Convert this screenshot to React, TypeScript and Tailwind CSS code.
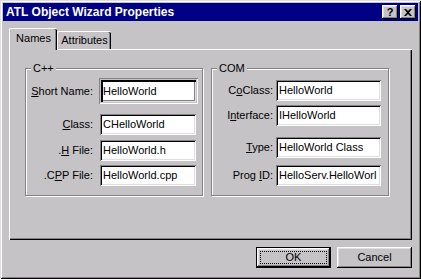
import React from "react";

const raised =
  "shadow-[inset_-1px_-1px_#000,inset_1px_1px_#fff,inset_-2px_-2px_#848284,inset_2px_2px_#dedfde]";
const sunken =
  "shadow-[inset_1px_1px_#848284,inset_-1px_-1px_#fff,inset_2px_2px_#000,inset_-2px_-2px_#dedfde]";

function Label({ text, k, width }: { text: string; k: number; width: string }) {
  return (
    <span className={`${width} text-right whitespace-nowrap leading-[13px]`}>
      {text.slice(0, k)}
      <u className="underline-offset-[1px]">{text[k]}</u>
      {text.slice(k + 1)}
    </span>
  );
}

function Field({ value, width }: { value: string; width: string }) {
  return (
    <div
      className={`${width} h-[21px] bg-white ${sunken} pl-[3px] pr-[2px] flex items-center overflow-hidden whitespace-nowrap`}
    >
      {value}
    </div>
  );
}

function Row({
  label,
  k,
  value,
  labelW,
  gap,
  fieldW,
  className = "",
}: {
  label: string;
  k: number;
  value: string;
  labelW: string;
  gap: string;
  fieldW: string;
  className?: string;
}) {
  return (
    <div className={`flex items-center ${className}`}>
      <Label text={label} k={k} width={labelW} />
      <div className={gap} />
      <Field value={value} width={fieldW} />
    </div>
  );
}

function GroupBox({ title, children, className = "" }: { title: string; children: React.ReactNode; className?: string }) {
  return (
    <div
      className={`relative w-[178px] h-[128px] border border-[#848284] shadow-[inset_1px_1px_#fff,1px_1px_#fff] ${className}`}
    >
      <span className="absolute -top-[7px] left-[5px] px-[2px] bg-[#c6c3c6] leading-[13px]">{title}</span>
      {children}
    </div>
  );
}

export default function App() {
  return (
    <div className="w-[421px] h-[279px] bg-[#c6c3c6] p-[3px] flex flex-col text-[11px] text-black font-['Liberation_Sans',Arial,sans-serif] shadow-[inset_1px_1px_#dedfde,inset_-1px_-1px_#000,inset_2px_2px_#fff,inset_-2px_-2px_#848284]">
      {/* Title bar */}
      <div className="h-[18px] bg-[#000084] flex items-center pl-[3px] pr-[2px]">
        <span className="flex-1 text-white font-bold text-[12px] leading-[14px]">ATL Object Wizard Properties</span>
        <div className={`w-[16px] h-[14px] bg-[#c6c3c6] ${raised} flex items-center justify-center font-bold text-[11px] leading-none`}>
          ?
        </div>
        <div className={`w-[16px] h-[14px] ml-[2px] bg-[#c6c3c6] ${raised} flex items-center justify-center`}>
          <svg width="8" height="7" viewBox="0 0 8 7">
            <path d="M0 0h2l2 2 2-2h2L5 3.5 8 7H6L4 5 2 7H0l3-3.5z" fill="#000" />
          </svg>
        </div>
      </div>

      <div className="flex-1 flex flex-col px-[6px] pt-[7px]">
        {/* Tabs */}
        <div className="flex items-end">
          <div className="relative z-10 w-[48px] h-[22px] -mb-px bg-[#c6c3c6] border-t border-l border-white rounded-tl-[2px] rounded-tr-[2px] shadow-[inset_-1px_0_#000,inset_-2px_0_#848284] flex items-start justify-center pt-[3px] leading-[13px]">
            Names
          </div>
          <div className="w-[54px] h-[18px] bg-[#c6c3c6] border-t border-l border-white rounded-tl-[2px] rounded-tr-[2px] shadow-[inset_-1px_0_#000,inset_-2px_0_#848284] flex items-start justify-center pt-[2px] leading-[13px]">
            Attributes
          </div>
        </div>

        {/* Tab panel */}
        <div className="h-[191px] flex gap-[8px] pt-[19px] pl-[16px] shadow-[inset_1px_1px_#fff,inset_-1px_-1px_#000,inset_-2px_-2px_#848284]">
          <GroupBox title="C++">
            <div className="flex flex-col pt-[9px]">
              <div className="flex items-center">
                <Label text="Short Name:" k={0} width="w-[67px]" />
                <div className="w-[6px]" />
                <div className="w-[99px] h-[26px] p-[2px] shadow-[inset_1px_1px_#848284,inset_-1px_-1px_#fff]">
                  <div className="w-full h-full bg-white pl-[2px] flex items-center shadow-[inset_2px_2px_#000,inset_-1px_-1px_#dedfde,inset_-2px_-2px_#848284]">
                    HelloWorld
                  </div>
                </div>
              </div>
              <Row className="mt-[10px]" label="Class:" k={0} value="CHelloWorld" labelW="w-[67px]" gap="w-[7px]" fieldW="w-[96px]" />
              <Row className="mt-[5px]" label=".H File:" k={1} value="HelloWorld.h" labelW="w-[67px]" gap="w-[7px]" fieldW="w-[96px]" />
              <Row className="mt-[4px]" label=".CPP File:" k={2} value="HelloWorld.cpp" labelW="w-[67px]" gap="w-[7px]" fieldW="w-[96px]" />
            </div>
          </GroupBox>
          <GroupBox title="COM">
            <div className="flex flex-col pt-[11px]">
              <Row label="CoClass:" k={1} value="HelloWorld" labelW="w-[61px]" gap="w-[3px]" fieldW="w-[105px]" />
              <Row className="mt-[4px]" label="Interface:" k={1} value="IHelloWorld" labelW="w-[61px]" gap="w-[3px]" fieldW="w-[105px]" />
              <Row className="mt-[11px]" label="Type:" k={0} value="HelloWorld Class" labelW="w-[61px]" gap="w-[3px]" fieldW="w-[105px]" />
              <Row className="mt-[7px]" label="Prog ID:" k={5} value="HelloServ.HelloWorl" labelW="w-[61px]" gap="w-[3px]" fieldW="w-[105px]" />
            </div>
          </GroupBox>
        </div>

        {/* Buttons */}
        <div className="flex justify-end gap-[6px] mt-[7px]">
          <div className="w-[75px] h-[21px] border border-black">
            <div className={`w-full h-full ${raised} p-[3px]`}>
              <div className="w-full h-full border border-dotted border-black flex items-center justify-center leading-[13px]">
                OK
              </div>
            </div>
          </div>
          <div className={`w-[75px] h-[21px] ${raised} flex items-center justify-center leading-[13px]`}>Cancel</div>
        </div>
      </div>
    </div>
  );
}
